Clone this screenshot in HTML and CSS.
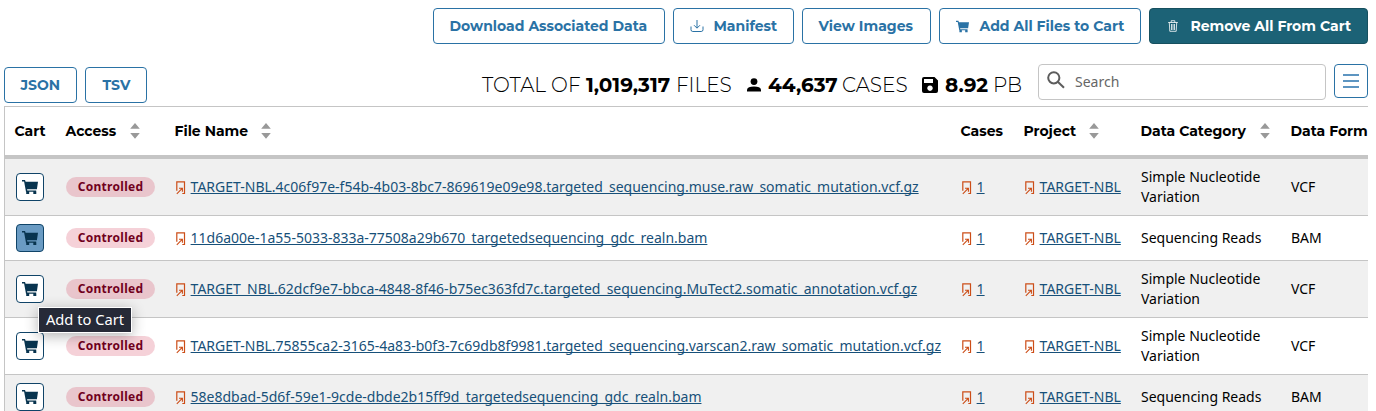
FILE: index.html
```html
<!DOCTYPE html>
<html lang="en">
<head>
<meta charset="utf-8">
<title>Files</title>
<link rel="stylesheet" href="styles.css">
</head>
<body>
<svg width="0" height="0" class="defs">
  <symbol id="cart" viewBox="0 0 16 16"><path d="M0 1h3l.6 1.8H16l-1.1 7.4H5.1l.2 1.2h8.9v1.3H4L2.1 2.4H0zM4.2 12.5h3V15h-3zM11.3 12.5h3V15h-3z"/></symbol>
  <symbol id="ext" viewBox="0 0 10 14"><path d="M.8 9.8V.8h7.7v11.7H6.3" fill="none" stroke="currentColor" stroke-width="1.2"/><path d="M.8 12.8 6.2 7.4M3 7.2h3.4v3.5" fill="none" stroke="currentColor" stroke-width="1.1"/></symbol>
  <symbol id="sort" viewBox="0 0 10 16"><path d="M5 0 9.8 5.8H.2zM5 15.8.2 10h9.6z"/></symbol>
</svg>
<div class="actions">
  <button class="btn download"><span>Download Associated Data</span></button>
  <button class="btn manifest"><svg width="14" height="14" viewBox="0 0 14 14"><path d="M7 1v8M4 6.2l3 3 3-3M1 7.5v3.2Q1 12.5 2.8 12.5h8.4q1.8 0 1.8-1.8V7.5" fill="none" stroke="currentColor" stroke-width="1"/></svg><span>Manifest</span></button>
  <button class="btn images"><span>View Images</span></button>
  <button class="btn add"><svg width="13" height="13"><use href="#cart"/></svg><span>Add All Files to Cart</span></button>
  <button class="btn remove"><svg width="12" height="14" viewBox="0 0 12 14"><path d="M1.2 3.5h9.6M4.2 3.5V1.7h3.6v1.8M2.3 3.5l.5 8.8h6.4l.5-8.8M4.5 5v6M6 5v6M7.5 5v6" fill="none" stroke="currentColor" stroke-width=".8"/></svg><span>Remove All From Cart</span></button>
</div>
<div class="toolbar">
  <button class="btn json"><span>JSON</span></button>
  <button class="btn tsv"><span>TSV</span></button>
  <div class="totals">
    <span class="t1">TOTAL OF</span><b class="t2">1,019,317</b><span class="t3">FILES</span>
    <svg class="person" width="14" height="14" viewBox="0 0 14 14"><circle cx="7" cy="3.6" r="3.4"/><path d="M0 13.5v-1.8Q.5 8.5 7 8.5t7 3.2v1.8z"/></svg>
    <b class="t4">44,637</b><span class="t5">CASES</span>
    <svg class="disk" width="16" height="16" viewBox="0 0 16 16"><path fill-rule="evenodd" d="M2 0h10.5L16 3.5V14q0 2-2 2H2q-2 0-2-2V2Q0 0 2 0zm0 2v4h9V2zm6 6.5a2.7 2.7 0 1 0 .01 0z"/></svg>
    <b class="t6">8.92</b><span class="t7">PB</span>
  </div>
  <div class="search"><svg width="18" height="18" viewBox="0 0 18 18"><g fill="none" stroke="#5c5c5c" stroke-width="2"><circle cx="6.8" cy="6.8" r="5.6"/><path d="m10.8 10.8 6.2 6"/></g></svg><span>Search</span></div>
  <button class="btn menu"><svg width="16" height="14" viewBox="0 0 16 14"><path d="M0 1h16M0 7h16M0 13h16" stroke="#5d95c1" stroke-width="2"/></svg></button>
</div>
<div class="table">
  <div class="row head">
    <div><span class="h1">Cart</span></div>
    <div><span class="h2">Access</span><svg width="10" height="16"><use href="#sort"/></svg></div>
    <div><span class="h3">File Name</span><svg width="10" height="16"><use href="#sort"/></svg></div>
    <div><span class="h4">Cases</span></div>
    <div><span class="h5">Project</span><svg width="10" height="16"><use href="#sort"/></svg></div>
    <div><span class="h6">Data Category</span><svg width="10" height="16"><use href="#sort"/></svg></div>
    <div><span class="h7">Data Form</span></div>
  </div>
  <div class="row tall odd">
    <div><button class="cart"><svg width="16" height="16"><use href="#cart"/></svg></button></div>
    <div><span class="badge">Controlled</span></div>
    <div><svg class="ext"><use href="#ext"/></svg><a>TARGET-NBL.4c06f97e-f54b-4b03-8bc7-869619e09e98.targeted_sequencing.muse.raw_somatic_mutation.vcf.gz</a></div>
    <div><svg class="ext"><use href="#ext"/></svg><a>1</a></div>
    <div><svg class="ext"><use href="#ext"/></svg><a>TARGET-NBL</a></div>
    <div>Simple Nucleotide<br>Variation</div>
    <div>VCF</div>
  </div>
  <div class="row">
    <div><button class="cart active"><svg width="16" height="16"><use href="#cart"/></svg></button></div>
    <div><span class="badge">Controlled</span></div>
    <div><svg class="ext"><use href="#ext"/></svg><a>11d6a00e-1a55-5033-833a-77508a29b670_targetedsequencing_gdc_realn.bam</a></div>
    <div><svg class="ext"><use href="#ext"/></svg><a>1</a></div>
    <div><svg class="ext"><use href="#ext"/></svg><a>TARGET-NBL</a></div>
    <div>Sequencing Reads</div>
    <div>BAM</div>
  </div>
  <div class="row tall odd">
    <div><button class="cart"><svg width="16" height="16"><use href="#cart"/></svg></button><span class="tip">Add to Cart</span></div>
    <div><span class="badge">Controlled</span></div>
    <div><svg class="ext"><use href="#ext"/></svg><a>TARGET_NBL.62dcf9e7-bbca-4848-8f46-b75ec363fd7c.targeted_sequencing.MuTect2.somatic_annotation.vcf.gz</a></div>
    <div><svg class="ext"><use href="#ext"/></svg><a>1</a></div>
    <div><svg class="ext"><use href="#ext"/></svg><a>TARGET-NBL</a></div>
    <div>Simple Nucleotide<br>Variation</div>
    <div>VCF</div>
  </div>
  <div class="row tall">
    <div><button class="cart"><svg width="16" height="16"><use href="#cart"/></svg></button></div>
    <div><span class="badge">Controlled</span></div>
    <div><svg class="ext"><use href="#ext"/></svg><a>TARGET-NBL.75855ca2-3165-4a83-b0f3-7c69db8f9981.targeted_sequencing.varscan2.raw_somatic_mutation.vcf.gz</a></div>
    <div><svg class="ext"><use href="#ext"/></svg><a>1</a></div>
    <div><svg class="ext"><use href="#ext"/></svg><a>TARGET-NBL</a></div>
    <div>Simple Nucleotide<br>Variation</div>
    <div>VCF</div>
  </div>
  <div class="row odd">
    <div><button class="cart"><svg width="16" height="16"><use href="#cart"/></svg></button></div>
    <div><span class="badge">Controlled</span></div>
    <div><svg class="ext"><use href="#ext"/></svg><a>58e8dbad-5d6f-59e1-9cde-dbde2b15ff9d_targetedsequencing_gdc_realn.bam</a></div>
    <div><svg class="ext"><use href="#ext"/></svg><a>1</a></div>
    <div><svg class="ext"><use href="#ext"/></svg><a>TARGET-NBL</a></div>
    <div>Sequencing Reads</div>
    <div>BAM</div>
  </div>
</div>
</body>
</html>
```
FILE: styles.css
```css
* { box-sizing: border-box; }
html, body { height: 411px; overflow: hidden; }
body { margin: 0; padding: 8px 8px 0 4px; background: #fff; color: #000; font: 14px/20px "Noto Sans", sans-serif; }
svg { flex: none; display: block; fill: currentColor; }
.defs { position: absolute; }
.actions { display: flex; justify-content: flex-end; gap: 8px; height: 36px; }
.btn { display: flex; align-items: center; height: 36px; padding: 0 0 0 15.5px; border: 1px solid #2a72a5; border-radius: 4px; background: #fff; color: #2a72a5; font: 700 14px/20px Montserrat, Inter, sans-serif; white-space: nowrap; flex: none; }
.download { width: 232px; }
.manifest { width: 121px; }
.manifest svg { margin-right: 10px; }
.images { width: 129px; }
.add { width: 202px; }
.add svg { margin-right: 11px; }
.remove { width: 219px; background: #1c6276; border-color: #17505f; color: #fff; }
.remove svg { margin: 0 12px 0 1px; }
.toolbar { display: flex; height: 62px; padding-top: 20px; align-items: flex-start; }
.json { width: 73px; margin: 3px 8px 0 0; }
.tsv { width: 62px; margin-top: 3px; padding-left: 16.5px; }
.totals { display: flex; align-items: center; height: 40px; margin-left: 335px; width: 556px; padding-top: 1px; font: 300 20px/40px Montserrat, Inter, sans-serif; white-space: nowrap; }
.totals > * { flex: none; }
.totals b { font-weight: 700; }
.t1 { width: 104px; }
.t2 { width: 90px; }
.t3 { width: 71px; }
.t4 { width: 74px; }
.t5 { width: 80px; }
.t6 { width: 48px; }
.person { margin-right: 7px; }
.disk { margin-right: 7px; }
.search { display: flex; width: 288px; height: 36px; border: 1px solid #c5c5c5; border-radius: 4px; padding: 6px 0 0 8px; color: #666; }
.search span { margin: 1px 0 0 10px; }
.menu { width: 34px; height: 34px; margin-left: 8px; padding-left: 8px; }
.table { border: 1px solid #c5c5c5; border-right: 0; height: 320px; overflow: hidden; }
.row { display: grid; grid-template-columns: 51px 109px 786px 63px 117px 150px 160px; height: 45px; border-bottom: 1px solid #c5c5c5; white-space: nowrap; }
.row > div { display: flex; align-items: center; padding-left: 10px; position: relative; }
.tall { height: 57px; }
.odd { background: #f0f0f0; }
.head { height: 52px; border-bottom: 4px solid #c5c5c5; font: 700 14px/20px Montserrat, Inter, sans-serif; }
.head svg { color: #999; margin-left: 14px; }
.head span { margin-left: -.5px; }
.h2 { width: 50.5px; }
.h3 { width: 72.5px; }
.h5 { width: 51.5px; }
.h6 { width: 105.5px; }
.cart { display: grid; place-items: center; width: 28px; height: 28px; margin-left: 1px; padding: 0; border: 1px solid #104468; border-radius: 4px; background: #fff; color: #08344f; }
.cart.active { background: #6a9bc3; }
.badge { width: 89px; height: 20px; border-radius: 10px; background: rgba(211, 47, 79, .22); color: #70001c; font: 700 12px/19px "Noto Sans", sans-serif; letter-spacing: .3px; text-align: center; }
.ext { width: 10px; height: 14px; margin: 1px 4.6px 0 1px; color: #cc4d17; }
a { color: #175079; text-decoration: underline; text-underline-offset: 1px; text-decoration-skip-ink: none; }
.tip { position: absolute; z-index: 2; left: 33px; top: 46px; width: 94px; height: 26px; border: 1px solid #fff; background: #262a37; color: #fff; font: 14.7px/23px "Noto Sans", sans-serif; text-align: center; box-shadow: 0 3px 14px rgba(0, 0, 0, .3); }
```
